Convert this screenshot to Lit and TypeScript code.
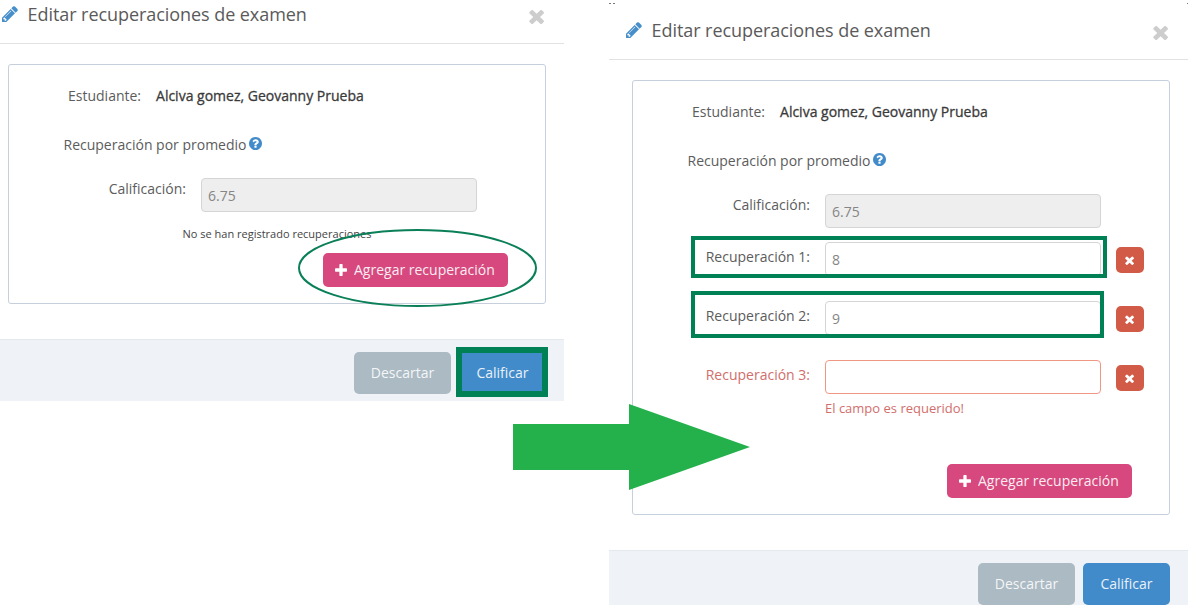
import { LitElement, html, css, svg, nothing } from "lit";
import { customElement, property } from "lit/decorators.js";

const PENCIL = "M491 1536l91-91-235-235-91 91v107h128v128h107zm523-928q0-22-22-22-10 0-17 7l-542 542q-7 7-7 17 0 22 22 22 10 0 17-7l542-542q7-7 7-17zm-54-192l416 416-832 832h-416v-416zm683 96q0 53-37 90l-166 166-416-416 166-165q36-38 90-38 53 0 91 38l235 234q37 39 37 91z";
const QUESTION = "M1024 1376v-192q0-14-9-23t-23-9h-192q-14 0-23 9t-9 23v192q0 14 9 23t23 9h192q14 0 23-9t9-23zm256-672q0-88-55.5-163t-138.5-116-170-41q-243 0-371 213-15 24 8 42l132 100q7 6 19 6 16 0 25-12 53-68 86-92 34-24 86-24 48 0 85.5 26t37.5 59q0 38-20 61t-68 45q-63 28-115.5 86.5t-52.5 125.5v36q0 14 9 23t23 9h192q14 0 23-9t9-23q0-19 21.5-49.5t54.5-49.5q32-18 49-28.5t46-35 44.5-48 28-60.5 12.5-81zm384 192q0 209-103 385.5t-279.5 279.5-385.5 103-385.5-103-279.5-279.5-103-385.5 103-385.5 279.5-279.5 385.5-103 385.5 103 279.5 279.5 103 385.5z";
const PLUS = "M1600 736v192q0 40-28 68t-68 28h-416v416q0 40-28 68t-68 28h-192q-40 0-68-28t-28-68v-416h-416q-40 0-68-28t-28-68v-192q0-40 28-68t68-28h416v-416q0-40 28-68t68-28h192q40 0 68 28t28 68v416h416q40 0 68 28t28 68z";
const TIMES = "M1490 1322q0 40-28 68l-136 136q-28 28-68 28t-68-28l-294-294-294 294q-28 28-68 28t-68-28l-136-136q-28-28-28-68t28-68l294-294-294-294q-28-28-28-68t28-68l136-136q28-28 68-28t68 28l294 294 294-294q28-28 68-28t68 28l136 136q28 28 28 68t-28 68l-294 294 294 294q28 28 28 68z";

const TIMES_VB = "282 282 1208 1272";
const PLUS_VB = "192 128 1408 1408";

const icon = (d: string, cls: string, vb = "0 0 1792 1792") =>
  html`<svg class=${cls} viewBox=${vb} preserveAspectRatio="none" aria-hidden="true">${svg`<path d=${d} fill="currentColor"></path>`}</svg>`;

interface Rec { label: string; value: string; error?: boolean; }

@customElement("exam-dialog")
class ExamDialog extends LitElement {
  @property({ attribute: false }) recs: Rec[] = [];

  static styles = css`
    :host { display: block; width: 579px; font-family: "Open Sans", sans-serif; font-size: 14px; color: #5c5c5c; background: #fff; }
    .head { height: 60px; box-sizing: border-box; border-bottom: 1px solid #e2e2e2; display: flex; align-items: center; padding: 1px 20px 0 17px; }
    .pencil { width: 16px; height: 16px; color: #478fca; margin-right: 9.5px; flex: none; }
    .title { font-size: 18px; color: #5a5a5a; flex: 1; line-height: 24px; letter-spacing: -0.06px; }
    .close { width: 15px; height: 15px; color: #cdcdcd; flex: none; margin-top: 4px; }
    .body { padding: 20px 18px 35px 23px; }
    .card { width: 538px; box-sizing: border-box; border: 1px solid #c5d0dc; border-radius: 3px; padding: 21px 37px 16px 0; }
    .student { display: flex; height: 20px; line-height: 20px; padding-left: 59px; }
    .student b { font-weight: 500; color: #3a3a3a; margin-left: 15px; -webkit-text-stroke: 0.3px #3a3a3a; }
    .avg { display: flex; align-items: center; height: 20px; line-height: 20px; margin-top: 28.5px; padding-left: 54.5px; white-space: pre; }
    .help { width: 13px; height: 13px; color: #428bca; margin: -3px 0 0 -1px; }
    .grid { display: grid; grid-template-columns: 177px 276px 28px; column-gap: 15px; align-items: start; }
    .calif { margin-top: 23.5px; }
    .label { text-align: right; line-height: 20px; padding-top: 5px; }
    .calif .label { padding-top: 1px; }
    .input { height: 34px; box-sizing: border-box; border: 1px solid #d5d5d5; border-radius: 4px; padding: 3px 6px 0; line-height: 28px; color: #858585; background: #fff; }
    .calif .input { background: #eee; }
    .rec { margin-top: 25px; }
    .rec.first { margin-top: 14px; }
    .rec.err .label { color: #d16e6c; }
    .rec.err .input { border-color: #f09784; }
    .del { width: 28px; height: 26px; margin-top: 5px; border-radius: 5px; background: #d15b47; color: #fff; display: flex; align-items: center; justify-content: center; }
    .del svg { width: 9px; height: 9px; margin-right: 2px; }
    .msg { grid-column: 2; color: #d16e6c; font-size: 13px; line-height: 18px; margin-top: 5px; white-space: nowrap; }
    .none { text-align: center; font-size: 11px; line-height: 16px; color: #444; margin: 14px -37px 0 0; }
    .actions { display: flex; justify-content: flex-end; }
    .actions.empty { margin-top: 11px; }
    .actions.filled { margin-top: 47px; }
    .add { height: 34px; width: 185px; box-sizing: border-box; border-radius: 5px; background: #d6487e; color: #fff; display: flex; align-items: center; padding-left: 12px; gap: 7px; line-height: 20px; }
    .add span { opacity: .9; }
    .add svg { width: 12px; height: 12px; flex: none; }
    .foot { height: 62px; box-sizing: border-box; background: #eff3f8; border-top: 1px solid #e4e9ee; padding: 12px 18px 0 0; display: flex; justify-content: flex-end; gap: 8px; }
    .btn { height: 42px; border-radius: 5px; color: #fff; display: flex; align-items: center; justify-content: center; line-height: 20px; }
    .btn span { opacity: .88; }
    .grey { width: 97px; background: #abbac3; }
    .blue { width: 87px; background: #428bca; }
  `;

  render() {
    const empty = this.recs.length === 0;
    return html`
      <div class="head">
        ${icon(PENCIL, "pencil", "128 128 1536 1536")}
        <div class="title">Editar recuperaciones de examen</div>
        ${icon(TIMES, "close", TIMES_VB)}
      </div>
      <div class="body">
        <div class="card">
          <div class="student"><span class="k">Estudiante:</span><b>Alciva gomez, Geovanny Prueba</b></div>
          <div class="avg">Recuperación por promedio ${icon(QUESTION, "help", "128 128 1536 1536")}</div>
          <div class="grid calif">
            <div class="label">Calificación:</div>
            <div class="input">6.75</div>
          </div>
          ${empty ? html`<div class="none">No se han registrado recuperaciones</div>` : nothing}
          ${this.recs.map((r, i) => html`
            <div class="grid rec ${i === 0 ? "first" : ""} ${r.error ? "err" : ""}">
              <div class="label">${r.label}</div>
              <div class="input">${r.value}</div>
              <div class="del">${icon(TIMES, "", TIMES_VB)}</div>
              ${r.error ? html`<div class="msg">El campo es requerido!</div>` : nothing}
            </div>`)}
          <div class="actions ${empty ? "empty" : "filled"}">
            <div class="add">${icon(PLUS, "", PLUS_VB)}<span>Agregar recuperación</span></div>
          </div>
        </div>
      </div>
      <div class="foot">
        <div class="btn grey"><span>Descartar</span></div>
        <div class="btn blue"><span>Calificar</span></div>
      </div>
    `;
  }
}

@customElement("app-root")
class AppRoot extends LitElement {
  static styles = css`
    :host { display: block; position: relative; width: 1193px; height: 609px; overflow: hidden; background: #fff; }
    .win { position: absolute; }
    .w1 { left: -15px; top: -16px; }
    .w2 { left: 609px; top: 0; height: 605px; overflow: hidden; }
    .mark { position: absolute; box-sizing: border-box; border: 4px solid #008055; }
    .m1 { left: 691px; top: 236px; width: 416px; height: 42px; }
    .m2 { left: 691px; top: 291px; width: 413px; height: 47px; }
    .m3 { left: 456px; top: 347px; width: 92px; height: 50px; border-width: 6px; }
    .over { position: absolute; left: 0; top: 0; width: 1193px; height: 609px; pointer-events: none; }
  `;

  private recs: Rec[] = [
    { label: "Recuperación 1:", value: "8" },
    { label: "Recuperación 2:", value: "9" },
    { label: "Recuperación 3:", value: "", error: true },
  ];

  render() {
    return html`
      <exam-dialog class="win w1" .recs=${[]}></exam-dialog>
      <exam-dialog class="win w2" .recs=${this.recs}></exam-dialog>
      <div class="mark m1"></div>
      <div class="mark m2"></div>
      <div class="mark m3"></div>
      <svg class="over" viewBox="0 0 1193 609" aria-hidden="true">
        <rect x="609" y="3" width="2" height="1" fill="#777"></rect>
        <rect x="613" y="3" width="2" height="1" fill="#777"></rect>
        <rect x="1187" y="3" width="1" height="1" fill="#777"></rect>
        <ellipse cx="417.5" cy="268" rx="118.5" ry="38" fill="none" stroke="#0a7f58" stroke-width="2"></ellipse>
        <polygon points="513,424 629,424 629,404 750,447 629,490 629,470 513,470" fill="#24b14c"></polygon>
      </svg>
    `;
  }
}
